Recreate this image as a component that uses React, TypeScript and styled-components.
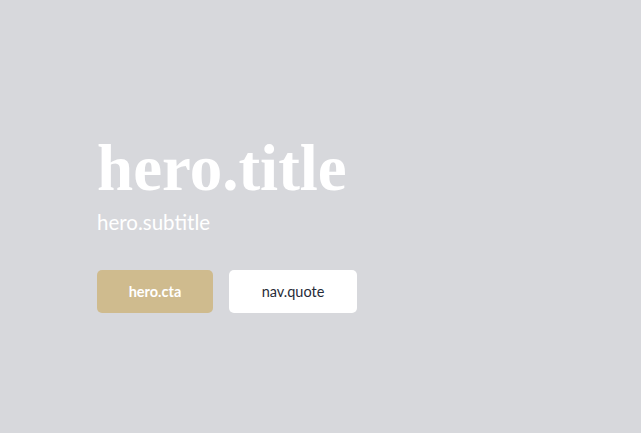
import React from "react";
import styled, { createGlobalStyle } from "styled-components";

const Global = createGlobalStyle`
  html, body { margin: 0; padding: 0; }
  body { background: #d7d8dc; }
`;

const Hero = styled.section`
  box-sizing: border-box;
  width: 641px;
  height: 433px;
  background: #d7d8dc;
  display: flex;
  flex-direction: column;
  justify-content: center;
  padding: 12px 0 0 97px;
`;

const Title = styled.h1`
  margin: 0;
  font-family: "Liberation Serif", "DejaVu Serif", serif;
  font-weight: 700;
  font-size: 65px;
  line-height: 70px;
  color: #ffffff;
  letter-spacing: 0px;
`;

const Subtitle = styled.p`
  margin: 7px 0 0;
  font-family: Lato, "Open Sans", sans-serif;
  font-size: 20.5px;
  line-height: 24px;
  color: #ffffff;
`;

const Actions = styled.div`
  display: flex;
  gap: 16px;
  margin-top: 36px;
`;

const Button = styled.button<{ $primary?: boolean }>`
  box-sizing: border-box;
  height: 43px;
  width: ${(p) => (p.$primary ? "116px" : "128px")};
  border: none;
  border-radius: 5px;
  font-family: Lato, "Open Sans", sans-serif;
  font-size: 14.5px;
  font-weight: ${(p) => (p.$primary ? 700 : 400)};
  background: ${(p) => (p.$primary ? "#cfbb8e" : "#ffffff")};
  color: ${(p) => (p.$primary ? "#ffffff" : "#272b38")};
  cursor: pointer;
`;

export default function App() {
  return (
    <>
      <Global />
      <Hero>
        <Title>hero.title</Title>
        <Subtitle>hero.subtitle</Subtitle>
        <Actions>
          <Button $primary>hero.cta</Button>
          <Button>nav.quote</Button>
        </Actions>
      </Hero>
    </>
  );
}
